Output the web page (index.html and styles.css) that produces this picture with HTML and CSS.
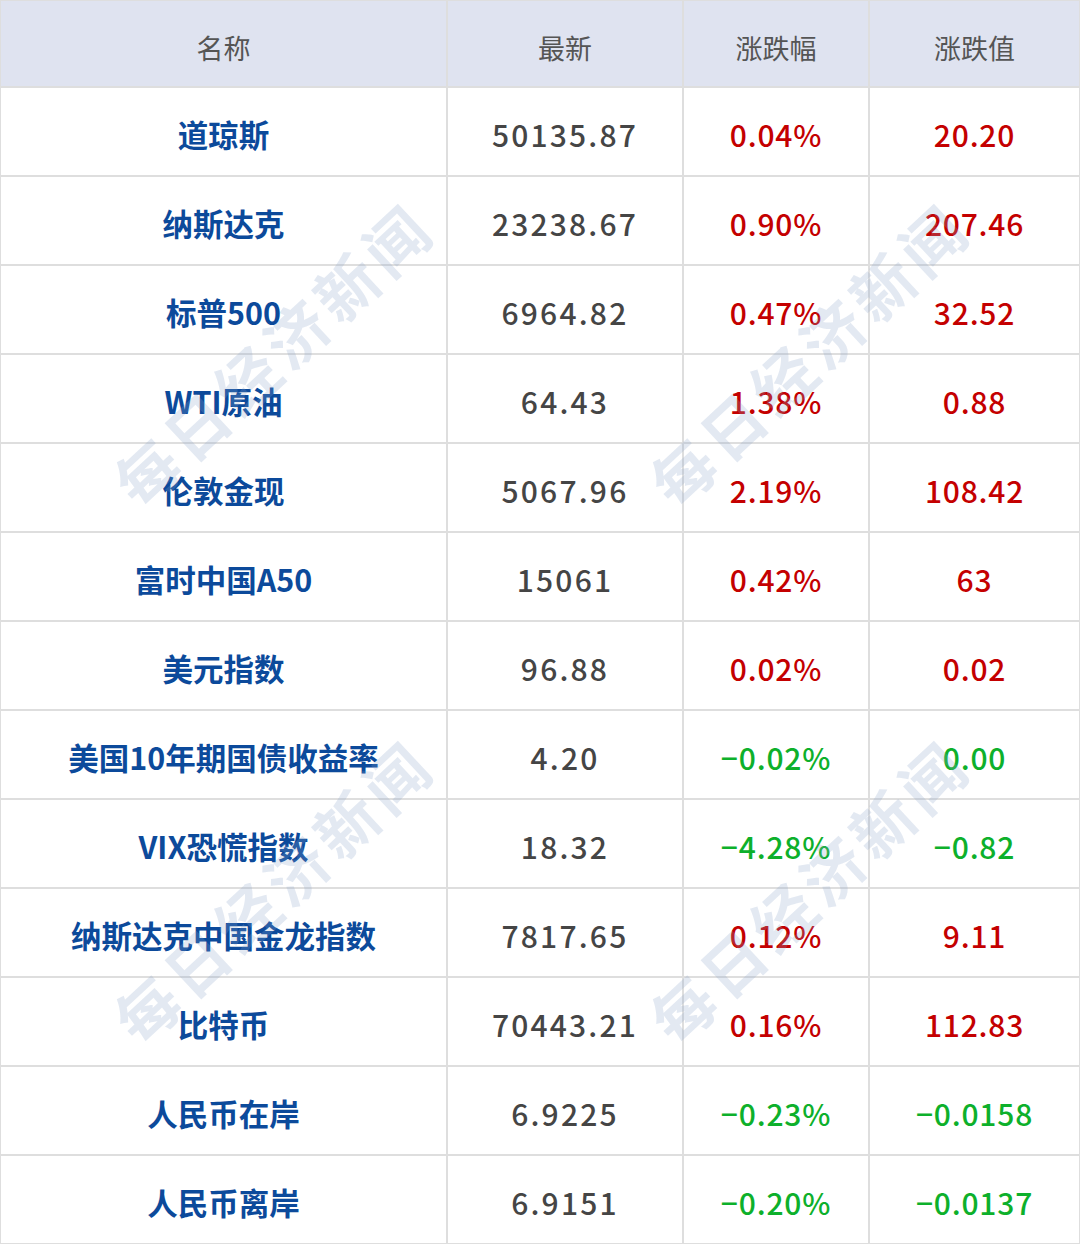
FILE: index.html
```html
<!DOCTYPE html>
<html lang="zh-CN">
<head>
<meta charset="utf-8">
<title>全球市场</title>
<link rel="stylesheet" href="styles.css">
</head>
<body>
<div class="wrap">
  <div class="table">
    <div class="cell head">名称</div>
    <div class="cell head">最新</div>
    <div class="cell head">涨跌幅</div>
    <div class="cell head">涨跌值</div>

    <div class="cell name">道琼斯</div><div class="cell num">50135.87</div><div class="cell up">0.04%</div><div class="cell up">20.20</div>
    <div class="cell name">纳斯达克</div><div class="cell num">23238.67</div><div class="cell up">0.90%</div><div class="cell up">207.46</div>
    <div class="cell name">标普500</div><div class="cell num">6964.82</div><div class="cell up">0.47%</div><div class="cell up">32.52</div>
    <div class="cell name">WTI原油</div><div class="cell num">64.43</div><div class="cell up">1.38%</div><div class="cell up">0.88</div>
    <div class="cell name">伦敦金现</div><div class="cell num">5067.96</div><div class="cell up">2.19%</div><div class="cell up">108.42</div>
    <div class="cell name">富时中国A50</div><div class="cell num">15061</div><div class="cell up">0.42%</div><div class="cell up">63</div>
    <div class="cell name">美元指数</div><div class="cell num">96.88</div><div class="cell up">0.02%</div><div class="cell up">0.02</div>
    <div class="cell name">美国10年期国债收益率</div><div class="cell num">4.20</div><div class="cell down">−0.02%</div><div class="cell down">0.00</div>
    <div class="cell name">VIX恐慌指数</div><div class="cell num">18.32</div><div class="cell down">−4.28%</div><div class="cell down">−0.82</div>
    <div class="cell name">纳斯达克中国金龙指数</div><div class="cell num">7817.65</div><div class="cell up">0.12%</div><div class="cell up">9.11</div>
    <div class="cell name">比特币</div><div class="cell num">70443.21</div><div class="cell up">0.16%</div><div class="cell up">112.83</div>
    <div class="cell name">人民币在岸</div><div class="cell num">6.9225</div><div class="cell down">−0.23%</div><div class="cell down">−0.0158</div>
    <div class="cell name">人民币离岸</div><div class="cell num">6.9151</div><div class="cell down">−0.20%</div><div class="cell down">−0.0137</div>
  </div>
  <div class="wm wm1">每日经济新闻</div>
  <div class="wm wm2">每日经济新闻</div>
  <div class="wm wm3">每日经济新闻</div>
  <div class="wm wm4">每日经济新闻</div>
</div>
</body>
</html>
```
FILE: styles.css
```css
html, body {
  margin: 0;
  padding: 0;
  background: #ffffff;
}
body {
  font-family: "Noto Sans CJK SC", "Noto Sans", sans-serif;
}
.wrap {
  position: relative;
  width: 1080px;
  height: 1244px;
  overflow: hidden;
}
.table {
  display: grid;
  grid-template-columns: 445px 234px 184px 209px;
  grid-template-rows: 85px repeat(13, 87px);
  gap: 2px;
  padding: 1px;
  background: #dedede;
  width: 1080px;
  height: 1244px;
  box-sizing: border-box;
}
.cell {
  display: flex;
  align-items: center;
  justify-content: center;
  background: #ffffff;
  padding-top: 5px;
  box-sizing: border-box;
  font-size: 30px;
  line-height: 1;
  white-space: nowrap;
}
.head {
  background: #dfe3f0;
  color: #555555;
  font-size: 27px;
  padding-top: 7px;
}
.name {
  color: #0c4a9b;
  font-weight: 700;
  font-size: 30.5px;
}
.num {
  color: #454545;
  font-weight: 500;
  letter-spacing: 2.2px;
}
.up {
  color: #c40000;
  font-weight: 500;
  letter-spacing: 0.8px;
}
.down {
  color: #0db02b;
  font-weight: 500;
  letter-spacing: 0.8px;
}
.wm {
  position: absolute;
  font-size: 62px;
  font-weight: 700;
  letter-spacing: 6px;
  color: rgba(140, 162, 200, 0.24);
  white-space: nowrap;
  line-height: 1;
  transform: translate(-50%, -50%) rotate(-43deg);
  pointer-events: none;
}
.wm1 { left: 272px; top: 353px; }
.wm2 { left: 808px; top: 353px; }
.wm3 { left: 272px; top: 890px; }
.wm4 { left: 808px; top: 890px; }
```
